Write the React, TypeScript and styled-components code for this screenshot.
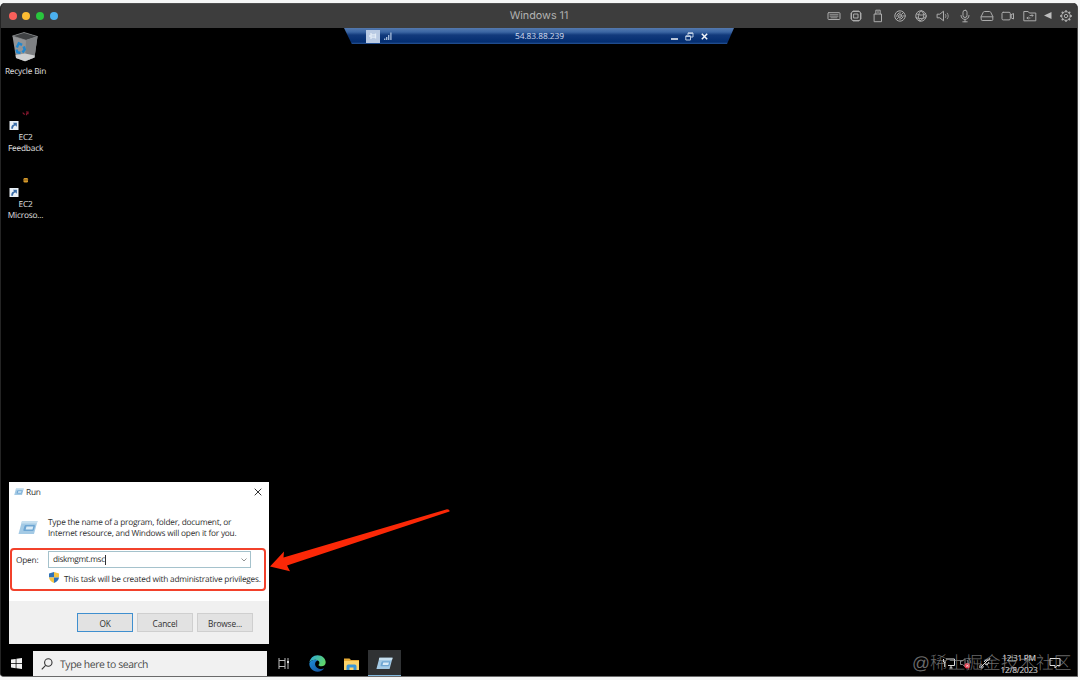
import React from "react";
import styled, { createGlobalStyle } from "styled-components";

const Global = createGlobalStyle`
  * { box-sizing: border-box; }
  body { margin: 0; background: #f4f5f5; overflow: hidden; text-rendering: geometricPrecision; }
`;

const ui = `"Open Sans", "Noto Sans", sans-serif`;

const Page = styled.div`
  width: 1080px;
  height: 680px;
  padding: 3px 2px 3px 0;
  background: #f5f6f6;
  font-family: ${ui};
`;

const Machine = styled.div`
  display: flex;
  flex-direction: column;
  height: 674px;
  background: #000;
  border-left: 1px solid #242424;
  border-right: 1px solid #4a4a4a;
  border-bottom: 1px solid #6a6a6a;
  border-radius: 5px 5px 0 4px;
  overflow: hidden;
`;

const TitleBar = styled.header`
  display: grid;
  grid-template-columns: 1fr auto 1fr;
  align-items: center;
  flex: none;
  height: 25px;
  background: #3d3d3d;
  border-top: 1px solid #505050;
`;

const Lights = styled.div`
  display: flex;
  gap: 5.7px;
  padding-left: 7.6px;
  margin-top: -1px;
`;

const Light = styled.span<{ $color: string }>`
  width: 8px;
  height: 8px;
  border-radius: 50%;
  background: ${(p) => p.$color};
`;

const Title = styled.h1`
  margin: 0;
  font: 400 10.8px/14px Inter, sans-serif;
  letter-spacing: -0.02px;
  color: #b2b2b2;
`;

const Devices = styled.div`
  display: flex;
  justify-content: flex-end;
  padding-right: 1.5px;
`;

const Device = styled.span<{ $w?: number }>`
  display: flex;
  align-items: center;
  justify-content: center;
  width: ${(p) => p.$w ?? 21.75}px;
  svg {
    width: 14px;
    height: 14px;
    flex: none;
    fill: none;
    stroke: #acacac;
    stroke-width: 1;
    stroke-linejoin: round;
    stroke-linecap: round;
  }
`;

const Desktop = styled.main`
  position: relative;
  flex: 1;
`;

const ConnectionBar = styled.div`
  position: absolute;
  left: 343px;
  top: 0;
  width: 390px;
  height: 16px;
  padding: 0 26px 0 22px;
  display: grid;
  grid-template-columns: 1fr auto 1fr;
  align-items: center;
  background: linear-gradient(#5479ae 0, #3b66a3 4px, #123a7c 7px, #032d70 14px, #285596 16px);
  clip-path: polygon(0 0, 100% 0, 98.2% 100%, 2% 100%);
`;

const Side = styled.div<{ $end?: boolean }>`
  display: flex;
  align-items: center;
  height: 14px;
  gap: ${(p) => (p.$end ? 7 : 4)}px;
  justify-content: ${(p) => (p.$end ? "flex-end" : "flex-start")};
  svg { display: block; }
`;

const Pin = styled.span`
  display: flex;
  align-items: center;
  justify-content: center;
  width: 14px;
  height: 13px;
  background: #b9cae3;
`;

const Address = styled.span`
  font-size: 8.4px;
  letter-spacing: -0.06px;
  line-height: 12px;
  color: #d3deee;
  padding-top: 1px;
  margin-left: 5px;
`;

const Shortcut = styled.div<{ $top: number }>`
  position: absolute;
  left: 0;
  top: ${(p) => p.$top}px;
  width: 49px;
  display: flex;
  flex-direction: column;
  align-items: center;
  svg { display: block; margin-left: -2px; }
`;

const Caption = styled.span<{ $gap: number }>`
  margin-top: ${(p) => p.$gap}px;
  font-size: 8.3px;
  letter-spacing: -0.19px;
  line-height: 11px;
  text-align: center;
  white-space: pre;
  color: #e2e2e2;
`;

const Dialog = styled.section`
  position: absolute;
  left: 8px;
  top: 454px;
  width: 260px;
  height: 162px;
  display: flex;
  flex-direction: column;
  background: #fff;
  color: #303030;
  font-size: 8.3px;
  letter-spacing: -0.22px;
`;

const DialogTitle = styled.div`
  display: flex;
  align-items: center;
  height: 19px;
  padding: 0 7px 0 5px;
  svg { display: block; }
  span { flex: 1; margin-left: 2px; padding-top: 1px; }
`;

const Intro = styled.div`
  display: flex;
  align-items: center;
  gap: 10px;
  height: 47px;
  padding: 7px 0 0 9px;
  svg { margin-top: -2px; }
  p {
    margin: 0;
    line-height: 11px;
    white-space: pre;
  }
`;

const Highlight = styled.div`
  height: 43px;
  margin: 0 3px 0 1px;
  border: 2px solid #f2412b;
  border-radius: 4px;
  padding: 1px 0 0 4px;
`;

const OpenRow = styled.label`
  display: flex;
  align-items: center;
  height: 17px;
  & > span { width: 32px; padding-top: 1px; }
`;

const Combo = styled.div`
  display: flex;
  align-items: center;
  width: 203px;
  height: 17px;
  padding: 0 3px 0 4px;
  border: 1px solid #a5c2cc;
  span { display: block; line-height: 10px; border-right: 1px solid #333; letter-spacing: -0.36px; }
  svg { margin-left: auto; }
`;

const Notice = styled.div`
  display: flex;
  align-items: center;
  height: 21px;
  padding: 1px 0 0 33px;
  gap: 5px;
  white-space: nowrap;
  svg { flex: none; margin-top: -4px; }
`;

const Actions = styled.footer`
  display: flex;
  justify-content: flex-end;
  gap: 4px;
  margin-top: auto;
  height: 43px;
  padding: 12px 16px 0 0;
  background: #f0f0f0;
`;

const Button = styled.button<{ $primary?: boolean }>`
  width: 56px;
  height: 19px;
  padding: 1px 0 0;
  border: 1px solid ${(p) => (p.$primary ? "#3f8fcf" : "#cfcfcf")};
  background: #e2e2e2;
  font: 8.3px ${ui};
  letter-spacing: -0.15px;
  color: #303030;
`;

const Arrow = styled.svg`
  position: absolute;
  left: 264px;
  top: 477px;
`;

const Taskbar = styled.nav`
  display: flex;
  flex: none;
  height: 26px;
  background: #000;
`;

const Task = styled.div<{ $w: number; $active?: boolean }>`
  display: flex;
  align-items: center;
  justify-content: center;
  width: ${(p) => p.$w}px;
  padding-top: 1px;
  background: ${(p) => (p.$active ? "#303234" : "transparent")};
  border-bottom: ${(p) => (p.$active ? "1px solid #82b8de" : "0")};
`;

const Search = styled.div`
  display: flex;
  align-items: center;
  gap: 7px;
  width: 234px;
  margin-top: 1px;
  padding: 0 0 0 8px;
  background: #f1f1f1;
  color: #484848;
  font-size: 10.4px;
  letter-spacing: -0.4px;
  span { padding-top: 2px; }
`;

const Tray = styled.div`
  position: relative;
  display: flex;
  align-items: center;
  margin-left: auto;
  width: 176px;
  padding-left: 42px;
  & > svg { flex: none; }
`;

const TrayIcon = styled.svg<{ $gap?: number }>`
  margin-left: ${(p) => p.$gap ?? 0}px;
`;

const Clock = styled.div`
  width: 40px;
  margin: 4px 0 0 8px;
  font-size: 8.4px;
  letter-spacing: -0.3px;
  line-height: 12.5px;
  text-align: center;
  white-space: nowrap;
  color: #e4e4e4;
`;

const Watermark = styled.span`
  position: absolute;
  left: 11px;
  top: 1px;
  font: 300 17.7px/24px "Liberation Sans", "Noto Sans CJK SC", sans-serif;
  white-space: nowrap;
  color: rgba(160, 160, 160, 0.66);
`;

const RunIcon = ({ w }: { w: number }) => (
  <svg width={w} height={w * 0.75} viewBox="0 0 20 15">
    <path d="M4 1h15.500l-3.500 13H.5z" fill="#a4cae5" />
    <path d="M4 1h15.500l-.7 2.600H3.300z" fill="#c6dfef" />
    <path d="M8 5h8q1.200 0 .9 1.200l-1 3.600q-.3 1.200-1.500 1.200H6.200q-1.200 0-.8-1.200l1-3.600Q6.800 5 8 5z" fill="#6ea6d3" />
    <path d="M8.500 6.500h6.800l-.8 3H7.700z" fill="#d9ebf7" />
  </svg>
);

const ShortcutBadge = ({ children }: { children: React.ReactNode }) => (
  <svg width="34" height="24" viewBox="0 0 34 24">
    {children}
    <rect x="1.500" y="14" width="9" height="9" fill="#e9f0f6" />
    <path d="M3.200 21.800c0-3 1-4.200 3-4.500l-1.300-1.600h4v4l-1.300-1.200c-1.800.2-2.500 1.200-2.600 3.300z" fill="#3a6da8" />
  </svg>
);

const deviceIcons: React.ReactNode[] = [
  <><rect x="1" y="3.700" width="12" height="6.800" rx=".8" /><path d="M3 5.700h8M3 7.200h8M4 8.800h6" strokeWidth=".8" /></>,
  <><rect x="2.500" y="2.500" width="9" height="9" rx="1.500" /><rect x="5" y="5" width="4" height="4" /><path d="M5 1.500v1M7 1.500v1M9 1.500v1M5 11.500v1M7 11.500v1M9 11.500v1M1.500 5h1M1.500 7h1M1.500 9h1M11.500 5h1M11.500 7h1M11.500 9h1" /></>,
  <><path d="M4.800 5V1.200h4.400V5" /><path d="M3.500 5h7v7.700h-7zM6.200 3h1.600" /></>,
  <><circle cx="7" cy="7" r="5.200" /><circle cx="7" cy="7" r="1.400" /><path d="M3.800 7.500A3.300 3.300 0 0 1 7.500 3.800M10.200 6.500A3.300 3.300 0 0 1 6.500 10.200M3.500 10.500l2-2M8.500 5.500l2-2" /></>,
  <><circle cx="7" cy="7" r="5.200" /><path d="M7.500 1.800C3.500 4 3.500 9 6 12M7.500 1.800c3.500 3 3.300 7.500-1.500 10.200M2.500 4.800c3 1.800 7 1.800 9.300-.3M2 8.500c3 1.700 7.500 1.500 10-.5" /></>,
  <><path d="M1.500 5.200h2.300L7.500 2.200v9.600L3.800 8.800H1.500z" /><path d="M9.500 5.500c.7 1 .7 2 0 3M11.300 4.200c1.300 2 1.300 3.800 0 5.600" strokeWidth=".8" /></>,
  <><rect x="5" y="1.200" width="4" height="7.300" rx="2" /><path d="M3 6.500c0 5.300 8 5.300 8 0M7 10.500v2.300M4.800 12.800h4.400" /></>,
  <><path d="M1.200 7.500 3.300 3.200Q3.600 2.500 4.500 2.500h5q.9 0 1.200.7l2.100 4.300v3a1 1 0 0 1-1 1H2.200a1 1 0 0 1-1-1zM1.200 7.800h11.600" /></>,
  <><rect x="1" y="3.300" width="8.300" height="7.600" rx="1.200" /><path d="M10.500 5.500l2-1v5.500l-2-1z" /></>,
  <><path d="M1.200 2.500h4l1.200 1.500h6.400v7.800H1.200z" /><path d="M4 9h3M5 8 4 9l1 1M10 6.500H7M9 5.500l1 1-1 1" strokeWidth=".9" /></>,
];

const ringTeeth = [0, 45, 90, 135, 180, 225, 270, 315];

export default function App() {
  return (
    <Page>
      <Global />
      <Machine>
        <TitleBar>
          <Lights>
            <Light $color="#f9605a" />
            <Light $color="#fcbc33" />
            <Light $color="#29c53d" />
            <Light $color="#4bb0ef" />
          </Lights>
          <Title>Windows 11</Title>
          <Devices>
            {deviceIcons.map((icon, i) => (
              <Device key={i}><svg viewBox="0 0 14 14">{icon}</svg></Device>
            ))}
            <Device $w={14.5}>
              <svg viewBox="0 0 14 14"><path d="M3 6.500 10.500 3v7z" fill="#bdbdbd" stroke="none" /></svg>
            </Device>
            <Device $w={20}>
              <svg viewBox="0 0 14 14">
                <circle cx="7" cy="7" r="4.400" />
                <circle cx="7" cy="7" r="1.700" />
                {ringTeeth.map((a) => (
                  <path key={a} d="M7 1.900v.5" strokeWidth="1.900" transform={`rotate(${a} 7 7)`} />
                ))}
              </svg>
            </Device>
          </Devices>
        </TitleBar>

        <Desktop>
          <ConnectionBar>
            <Side>
              <Pin>
                <svg width="8" height="8" viewBox="0 0 8 8"><path d="M0 4h2M2 1v6M2 2.800h4.500v2.400H2M6.500 1.500v5" fill="none" stroke="#e3ecf7" strokeWidth="1.300" /></svg>
              </Pin>
              <svg width="8" height="8" viewBox="0 0 8 8">
                <path d="M.7 8V6.500M2.700 8V5M4.700 8V3M6.900 8V.5" stroke="#a9bedb" strokeWidth="1.300" />
              </svg>
            </Side>
            <Address>54.83.88.239</Address>
            <Side $end>
              <svg width="7" height="8" viewBox="0 0 7 8"><path d="M0 7h7" stroke="#f3f6fa" strokeWidth="1.600" /></svg>
              <svg width="9" height="9" viewBox="0 0 9 9">
                <path d="M3 3V1h5v4H6" fill="none" stroke="#bccce2" /><path d="M.8 4h4.700v4H.8z" fill="none" stroke="#bccce2" /><path d="M3 1.200h5M.8 4.200h4.700" stroke="#bccce2" strokeWidth="1.400" />
              </svg>
              <svg width="7" height="7" viewBox="0 0 7 7"><path d="m.8.800 5.400 5.400m0-5.400L.8 6.200" stroke="#f3f6fa" strokeWidth="1.500" /></svg>
            </Side>
          </ConnectionBar>

          <Shortcut $top={3}>
            <svg width="28" height="31" viewBox="0 0 28 31">
              <path d="M1.500 5 13 1.500l13.500 4-3 21L14 30.300 5 27z" fill="#929496" />
              <path d="M1.500 5 13 1.500l13.500 4L15 9.300z" fill="#3f4143" stroke="#8e9092" strokeWidth=".7" />
              <path d="M15 9.300 26.500 5.500l-3 21L14 30.300z" fill="#7e8083" />
              <path d="m4.600 24 9.400-1.500 9.700 2-.3 2L14 30.300 5 27z" fill="#cfd0d1" />
              <g fill="none" stroke="#2287ce" strokeWidth="2.500">
                <path d="m5.800 16.500 2-4.200 3.300 1.500M12.700 15.500l1 3-2.200 3M9.500 22l-3.200-.7-.8-2.800" />
              </g>
            </svg>
            <Caption $gap={4}>Recycle Bin</Caption>
          </Shortcut>
          <Shortcut $top={79}>
            <ShortcutBadge>
              <path d="M15 5.500c0 1.500 1 1.500 2 1.800M18 5h2v1.800h-1.500v1.500" fill="none" stroke="#8e1831" strokeWidth="1.100" />
            </ShortcutBadge>
            <Caption $gap={1}>{"EC2\nFeedback"}</Caption>
          </Shortcut>
          <Shortcut $top={146}>
            <ShortcutBadge>
              <rect x="15.500" y="4" width="4.500" height="4.500" rx="1.200" fill="#d59a2b" />
              <path d="M15.500 6h4.500" stroke="#6e4a12" strokeWidth=".8" />
            </ShortcutBadge>
            <Caption $gap={1}>{"EC2\nMicroso..."}</Caption>
          </Shortcut>

          <Dialog>
            <DialogTitle>
              <RunIcon w={10} />
              <span>Run</span>
              <svg width="8" height="8" viewBox="0 0 8 8"><path d="m.7.700 6.600 6.600m0-6.600L.7 7.300" stroke="#333" strokeWidth="1" /></svg>
            </DialogTitle>
            <Intro>
              <RunIcon w={20} />
              <p>{"Type the name of a program, folder, document, or\nInternet resource, and Windows will open it for you."}</p>
            </Intro>
            <Highlight>
              <OpenRow>
                <span>Open:</span>
                <Combo>
                  <span>diskmgmt.msc</span>
                  <svg width="6" height="4" viewBox="0 0 6 4"><path d="m.5.500 2.500 2.500L5.500.5" fill="none" stroke="#777" strokeWidth=".8" /></svg>
                </Combo>
              </OpenRow>
              <Notice>
                <svg width="10" height="11" viewBox="0 0 10 11">
                  <path d="M5 0 0 1.500V5.500h5z" fill="#2f72b8" />
                  <path d="m5 0 5 1.500v4H5z" fill="#f5c443" />
                  <path d="M0 5.500C.4 8 2 10 5 11V5.500z" fill="#f5c443" />
                  <path d="M10 5.500C9.600 8 8 10 5 11V5.500z" fill="#2f72b8" />
                </svg>
                <span>This task will be created with administrative privileges.</span>
              </Notice>
            </Highlight>
            <Actions>
              <Button $primary>OK</Button>
              <Button>Cancel</Button>
              <Button>Browse...</Button>
            </Actions>
          </Dialog>

          <Arrow width="186" height="72" viewBox="265 505 186 72">
            <path d="M270 566.500 284 551.500 283.500 557.500 447 509.200Q450 509.500 449.500 511.500L287 565.500 290 571.200z" fill="#fb2807" />
          </Arrow>
        </Desktop>

        <Taskbar>
          <Task $w={32}>
            <svg width="11" height="11" viewBox="0 0 11 11" style={{ marginLeft: -2 }}>
              <path d="M0 1.600 4.700.9v4.300H0zM5.400.8 11 0v5.200H5.400zM0 5.900h4.700v4.300L0 9.500zM5.400 5.900H11V11l-5.600-.8z" fill="#f2f2f2" />
            </svg>
          </Task>
          <Search>
            <svg width="12" height="12" viewBox="0 0 12 12">
              <circle cx="7.300" cy="4.500" r="3.700" fill="none" stroke="#333" strokeWidth="1.100" /><path d="M4.600 7.300.8 11.300" stroke="#333" strokeWidth="1.100" />
            </svg>
            <span>Type here to search</span>
          </Search>
          <Task $w={33}>
            <svg width="12" height="11" viewBox="0 0 12 11">
              <path d="M1 0v11M7 0v11M1 2.500h6M1 8.500h6M10 0v11" fill="none" stroke="#bdbdbd" /><rect x="9" y="3" width="2" height="2" fill="#ddd" />
            </svg>
          </Task>
          <Task $w={35}>
            <svg width="17" height="17" viewBox="0 0 17 17">
              <defs>
                <linearGradient id="edgeTop" x1="0" x2="1" y2=".5"><stop offset="0" stopColor="#2aa5e0" /><stop offset="1" stopColor="#5fd56b" /></linearGradient>
                <linearGradient id="edgeLow" x1="0" x2="1" y2="1"><stop offset="0" stopColor="#1e8fdc" /><stop offset="1" stopColor="#124c94" /></linearGradient>
              </defs>
              <path d="M.4 7.500C1 3.500 4.300.3 8.500.3c5 0 8.200 3.500 8.200 7 0 2.500-1.800 4-4.200 4-2 0-3-.7-3-1.300 0-.4.9-.8.9-2.200C10.400 6 8.700 4.700 6.300 4.700 3.500 4.700 1.500 6 .4 7.500z" fill="url(#edgeTop)" />
              <path d="M.3 8.500C.8 6 3.300 4.700 6.300 4.700c1 0 2 .3 2.700.8-2 .3-3 2-2.900 3.700.2 3 3 4.800 6 4.800 1.300 0 2.300-.3 3-.7-1.300 2-3.700 3.400-6.500 3.400C4 16.700.3 13 .3 8.500z" fill="url(#edgeLow)" />
            </svg>
          </Task>
          <Task $w={33}>
            <svg width="15" height="12" viewBox="0 0 15 12">
              <path d="M0 .5h5.500L7 2h8v10H0z" fill="#e5a934" /><path d="M0 3h15v9H0z" fill="#fbd36a" />
              <path d="M2.500 12V8.200q0-1.700 1.700-1.700h6.600q1.700 0 1.700 1.700V12H9.500V9.500h-4V12z" fill="#3a96d6" />
            </svg>
          </Task>
          <Task $w={33} $active><RunIcon w={17} /></Task>
          <Tray>
            <TrayIcon width="12" height="11" viewBox="0 0 12 11"><path d="M3 1h8.500v6.500H5M6.500 10h3M8 7.500V10M.5 1v3h2.500M1.700 4v5" fill="none" stroke="#ddd" /></TrayIcon>
            <TrayIcon $gap={5} width="12" height="12" viewBox="0 0 12 12">
              <path d="M.5 4h2L5 1.500v8L2.500 7.500h-2zM7 3c1 1.300 1 2.500.5 3.500M9 1.500c1 1.300 1.500 2.500 1.200 4" fill="none" stroke="#aaa" strokeWidth=".8" /><circle cx="7.300" cy="8.800" r="2.800" fill="#ea3b4c" /><path d="m6.300 7.800 2 2m0-2-2 2" stroke="#fff" strokeWidth=".7" />
            </TrayIcon>
            <TrayIcon $gap={7} width="12" height="12" viewBox="0 0 12 12"><path d="M1 11c-1-4 2-4 3-2s-2 3-2 1l7-7M5 5l2-2h3l1-2M6 7l2 1 2-3" fill="none" stroke="#ddd" /></TrayIcon>
            <Clock>12:31 PM<br />12/8/2023</Clock>
            <TrayIcon $gap={10} width="12" height="12" viewBox="0 0 12 12"><path d="M1 1.500h10v7H8l-2 2.500V8.500H1z" fill="none" stroke="#ddd" /></TrayIcon>
            <Watermark>@稀土掘金技术社区</Watermark>
          </Tray>
        </Taskbar>
      </Machine>
    </Page>
  );
}
